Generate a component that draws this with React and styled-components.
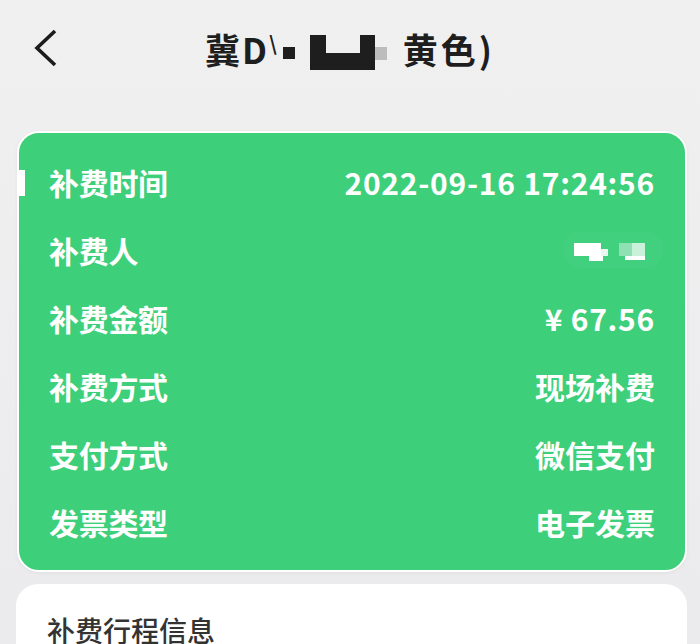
import React from 'react';
import styled, { createGlobalStyle } from 'styled-components';

const GlobalStyle = createGlobalStyle`
  html, body {
    margin: 0;
    padding: 0;
    background: #efeff0;
    font-family: "Noto Sans CJK SC", "Noto Sans", sans-serif;
  }
`;

const rows = [
  { label: '补费时间', value: '2022-09-16 17:24:56', digits: true },
  { label: '补费人', value: null },
  { label: '补费金额', value: '¥ 67.56', digits: true },
  { label: '补费方式', value: '现场补费' },
  { label: '支付方式', value: '微信支付' },
  { label: '发票类型', value: '电子发票' },
];

function App() {
  return (
    <Page>
      <GlobalStyle />
      <Header>
        <BackButton>
          <svg width="28" height="40" viewBox="0 0 28 40">
            <path d="M22 3 L4 20 L22 37" fill="none" stroke="#1c1c1c" strokeWidth="3.6" />
          </svg>
        </BackButton>
        <Title>
          <Plate>冀D</Plate>
          <Slash>\</Slash>
          <Mosaic>
            <svg width="110" height="40" viewBox="0 0 110 40">
              <rect x="2" y="17" width="12" height="12" fill="#1e1e1e" />
              <rect x="29" y="5" width="16" height="35" fill="#1e1e1e" />
              <rect x="45" y="23" width="49" height="17" fill="#1e1e1e" />
              <rect x="79" y="5" width="15" height="18" fill="#1e1e1e" />
              <rect x="94" y="17" width="12" height="13" fill="#bcbcbc" />
            </svg>
          </Mosaic>
          <Plate $wide>黄色)</Plate>
        </Title>
      </Header>

      <GreenCard>
        <Marker />
        {rows.map((r) => (
          <Row key={r.label}>
            <Label>{r.label}</Label>
            {r.value ? (
              <Value $digits={r.digits}>{r.value}</Value>
            ) : (
              <Blur>
                <svg width="100" height="36" viewBox="0 0 100 36">
                  <rect x="0" y="0" width="100" height="36" rx="16" fill="#41d07e" />
                  <rect x="11" y="11" width="27" height="13" fill="#ffffff" />
                  <rect x="38" y="17" width="7" height="7" fill="#e8f8ee" />
                  <rect x="26" y="24" width="14" height="5" fill="#ffffff" />
                  <rect x="56" y="11" width="13" height="13" fill="#8fe0b2" />
                  <rect x="69" y="11" width="13" height="13" fill="#c9f0d8" />
                  <rect x="62" y="24" width="20" height="4" fill="#ffffff" />
                </svg>
              </Blur>
            )}
          </Row>
        ))}
      </GreenCard>

      <WhiteCard>
        <SectionTitle>补费行程信息</SectionTitle>
      </WhiteCard>
    </Page>
  );
}

const Page = styled.div`
  width: 700px;
  height: 644px;
  overflow: hidden;
  background: linear-gradient(#f0f0f0, #ebebee);
  padding: 0 13px 0 16px;
  box-sizing: border-box;
`;

const Header = styled.div`
  position: relative;
  height: 98px;
  display: flex;
  align-items: center;
  justify-content: center;
  margin-left: -16px;
  margin-right: -13px;
`;

const BackButton = styled.div`
  position: absolute;
  left: 33px;
  top: 28px;
  width: 28px;
  height: 40px;
`;

const Title = styled.h1`
  margin: 0 0 2px 0;
  font-size: 35px;
  font-weight: 700;
  color: #1e1e1e;
  display: flex;
  align-items: center;
`;

const Plate = styled.span`
  letter-spacing: ${(p) => (p.$wide ? '3px' : '2px')};
`;

const Slash = styled.span`
  font-size: 20px;
  margin: 0 4px 12px 0;
`;

const Mosaic = styled.span`
  display: inline-flex;
  margin: 4px 12px 0 0;
`;

const GreenCard = styled.div`
  position: relative;
  margin-top: 33px;
  margin-left: 1px;
  background: #3ecf7a;
  border: 2px solid #ffffff;
  border-radius: 22px;
  padding: 15px 30px 14px 30px;
  box-shadow: 0 1px 4px rgba(0, 0, 0, 0.05);
`;

const Marker = styled.div`
  position: absolute;
  left: 0;
  top: 37px;
  width: 6px;
  height: 26px;
  background: #ffffff;
`;

const Row = styled.div`
  height: 68px;
  display: flex;
  align-items: center;
  justify-content: space-between;
  color: #ffffff;
  font-size: 30px;
  font-weight: 700;
`;

const Label = styled.span`
  letter-spacing: -0.3px;
`;

const Value = styled.span`
  letter-spacing: ${(p) => (p.$digits ? '0.75px' : '0')};
`;

const Blur = styled.span`
  display: inline-flex;
  margin-right: -8px;
  filter: blur(0.6px);
`;

const WhiteCard = styled.div`
  margin-top: 12px;
  height: 120px;
  background: #ffffff;
  border-radius: 22px;
  padding: 26px 31px 0;
`;

const SectionTitle = styled.div`
  font-size: 28px;
  font-weight: 500;
  color: #333333;
`;

export default App;
